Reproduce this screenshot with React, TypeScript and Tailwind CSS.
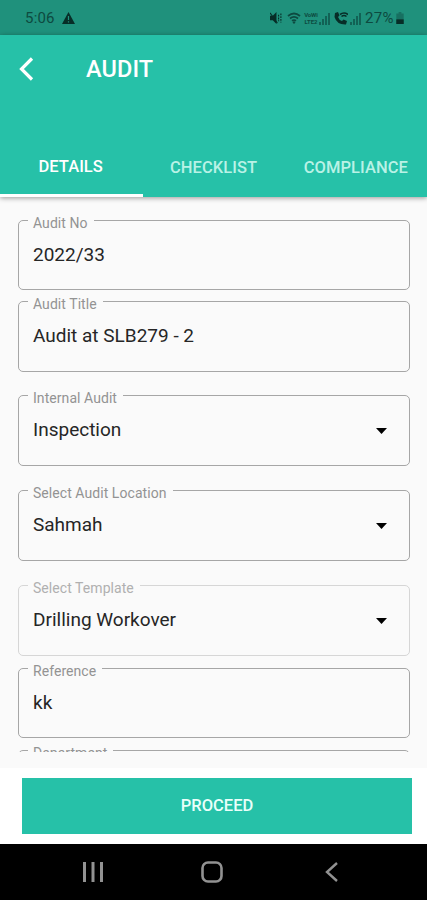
import React from 'react';
import clsx from 'clsx';

interface FieldProps {
    label: string;
    value: string;
    className?: string;
    select?: boolean;
    disabled?: boolean;
}

// Outlined input with the label sitting on top of the border
const Field: React.FC<FieldProps> = ({ label, value, className, select, disabled }) => (
    <div
        className={clsx(
            'relative ml-[18px] mr-[17px] flex shrink-0 items-start justify-between rounded-[5px] border pl-[14px] pr-[22px] pt-[21px]',
            disabled ? 'border-[#d6d6d6]' : 'border-[#a6a6a6]',
            className,
        )}
    >
        <span
            className={clsx(
                'absolute -top-[7px] left-[9px] whitespace-nowrap bg-[#fafafa] pl-[5px] pr-[6px] text-[14px] leading-[18px] tracking-[0.06px]',
                disabled ? 'text-[#b0b0b0]' : 'text-[#939393]',
            )}
        >
            {label}
        </span>
        <span className="text-[19px] leading-[26px] text-[#262626]">{value}</span>
        {select && (
            <svg className="mt-[11px] h-[6px] w-[11px]" viewBox="0 0 11 6" fill="#000">
                <path d="M0 0h11L5.5 6z" />
            </svg>
        )}
    </div>
);

const SignalIcon = () => (
    <svg className="h-[13px] w-[11px]" viewBox="0 0 11 13" fill="currentColor">
        <path d="M0 10h2v3H0zM3 7h2v6H3zM6 4h2v9H6zM9 1h2v12H9z" opacity=".65" />
    </svg>
);

const StatusBar = () => (
    <div className="flex h-[35px] shrink-0 items-center justify-between bg-[#1f917c] pl-[25px] pr-[23px] pt-px text-[#0d4a40]">
        <div className="flex items-center gap-[7px]">
            <span className="text-[15px] tracking-[0.2px]">5:06</span>
            <svg className="h-[12px] w-[13px] text-[#072d27]" viewBox="0 0 13 12">
                <path d="M6.5 0L13 12H0z" fill="currentColor" />
                <path d="M6.5 4v4M6.5 9.2v1.3" stroke="#1f917c" strokeWidth="1.2" />
            </svg>
        </div>
        <div className="flex items-center">
            <svg className="h-[12px] w-[12px] text-[#072d27]" viewBox="0 0 13 13" fill="none" stroke="currentColor">
                <path d="M0 4h3l4-4v13L3 9H0z" fill="currentColor" stroke="none" />
                <path d="M0 1l8 11" strokeWidth="1.2" />
                <path d="M9.3 3v7M11.8 1.5v10" strokeWidth="1.2" strokeDasharray="2 1" />
            </svg>
            <svg className="ml-[5px] h-[12px] w-[14px]" viewBox="0 0 14 12" fill="none" stroke="currentColor" strokeWidth="1.8">
                <path d="M1 4q6-5 12 0M3 6.5q4-3.3 8 0M5 8.8q2-1.5 4 0" />
                <path d="M7 9l1.5 1.5L7 12l-1.5-1.5z" fill="currentColor" stroke="none" />
            </svg>
            <div className="ml-[2px] flex w-[16px] flex-col items-center text-[6px] font-bold leading-[7px] tracking-[-0.1px]">
                <span>VoWi</span>
                <span>LTE2</span>
            </div>
            <SignalIcon />
            <svg className="ml-[4px] h-[13px] w-[14px] text-[#072d27]" viewBox="0 0 14 13" fill="none" stroke="currentColor">
                <path d="M1 1l3-1 1.5 3.5L4 5q1 3 4 4l1.5-1.5L13 9l-1 3.5Q3 13 .5 5z" fill="currentColor" stroke="none" />
                <path d="M6 2.5q4-3 8 0M7.5 4.5q2.5-2 5 0" strokeWidth="1.6" />
            </svg>
            <div className="ml-[2px]">
                <SignalIcon />
            </div>
            <span className="ml-[4px] text-[15px] tracking-[0.4px]">27%</span>
            <svg className="ml-[2px] h-[12px] w-[8px]" viewBox="0 0 8 13" fill="currentColor">
                <path d="M2.5 0h3v1.5H8V13H0V1.5h2.5z" opacity=".45" />
                <path d="M0 8h8v5H0z" fill="#072d27" />
            </svg>
        </div>
    </div>
);

const Header = () => (
    <div className="z-10 flex h-[161.5px] shrink-0 flex-col justify-between bg-[#26c1a8] text-white shadow-[0_1px_5px_rgba(0,0,0,0.4)]">
        <div className="flex h-[67px] items-center pl-[19px]">
            <svg className="h-[24px] w-[15px]" viewBox="0 0 15 24" fill="none" stroke="currentColor" strokeWidth="3.2">
                <path d="M13 1.5L2.5 12 13 22.5" />
            </svg>
            <h1 className="ml-[52px] pt-[3px] text-[23.5px] font-medium tracking-[0.1px]">AUDIT</h1>
        </div>
        <div className="grid h-[59px] grid-cols-3 text-[16.5px] font-medium tracking-[0.06px] text-[#b9f2e6]">
            <div className="-mr-px flex items-center justify-center border-b-[3px] border-white pr-[2px] pt-[4px] text-white">DETAILS</div>
            <div className="flex items-center justify-center pt-[2px]">CHECKLIST</div>
            <div className="flex items-center justify-center pt-[2px]">COMPLIANCE</div>
        </div>
    </div>
);

const NavBar = () => (
    <div className="flex h-[56px] shrink-0 items-center bg-black pl-[83px] text-[#929292]">
        <svg className="h-[20px] w-[20px]" viewBox="0 0 20 20" fill="currentColor">
            <path d="M0 0h3v20H0zM8.5 0h3v20h-3zM17 0h3v20h-3z" />
        </svg>
        <svg className="ml-[98px] h-[22px] w-[22px]" viewBox="0 0 22 22" fill="none" stroke="currentColor" strokeWidth="2.6">
            <rect x="1.5" y="1.5" width="19" height="19" rx="5.5" />
        </svg>
        <svg className="ml-[102px] h-[20px] w-[13px]" viewBox="0 0 13 20" fill="none" stroke="currentColor" strokeWidth="2.4">
            <path d="M12 1L2 10l10 9" />
        </svg>
    </div>
);

export default function App() {
    return (
        <div className="flex h-[900px] w-[427px] flex-col overflow-hidden bg-white font-[Roboto,sans-serif]">
            <StatusBar />
            <Header />

            {/* Form */}
            <div className="flex h-[571.5px] shrink-0 flex-col bg-[#fafafa]">
                <div className="flex h-[555px] flex-col overflow-hidden pt-[23.5px]">
                    <Field label="Audit No" value="2022/33" className="h-[70px]" />
                    <Field label="Audit Title" value="Audit at SLB279 - 2" className="mt-[11px] h-[71px]" />
                    <Field label="Internal Audit" value="Inspection" className="mt-[23px] h-[71px]" select />
                    <Field label="Select Audit Location" value="Sahmah" className="mt-[24px] h-[71px]" select />
                    <Field label="Select Template" value="Drilling Workover" className="mt-[24px] h-[71px]" select disabled />
                    <Field label="Reference" value="kk" className="mt-[12px] h-[70px]" />
                    <Field label="Department" value="" className="mt-[12px] h-[70px]" />
                </div>
            </div>

            {/* Footer action */}
            <div className="flex h-[76px] shrink-0 bg-white pb-[10px] pl-[22px] pr-[15px] pt-[10px]">
                <button className="h-[56px] w-full bg-[#26c1a8] pt-px text-[16.5px] font-medium text-[#e9fffa]">PROCEED</button>
            </div>

            <NavBar />
        </div>
    );
}
